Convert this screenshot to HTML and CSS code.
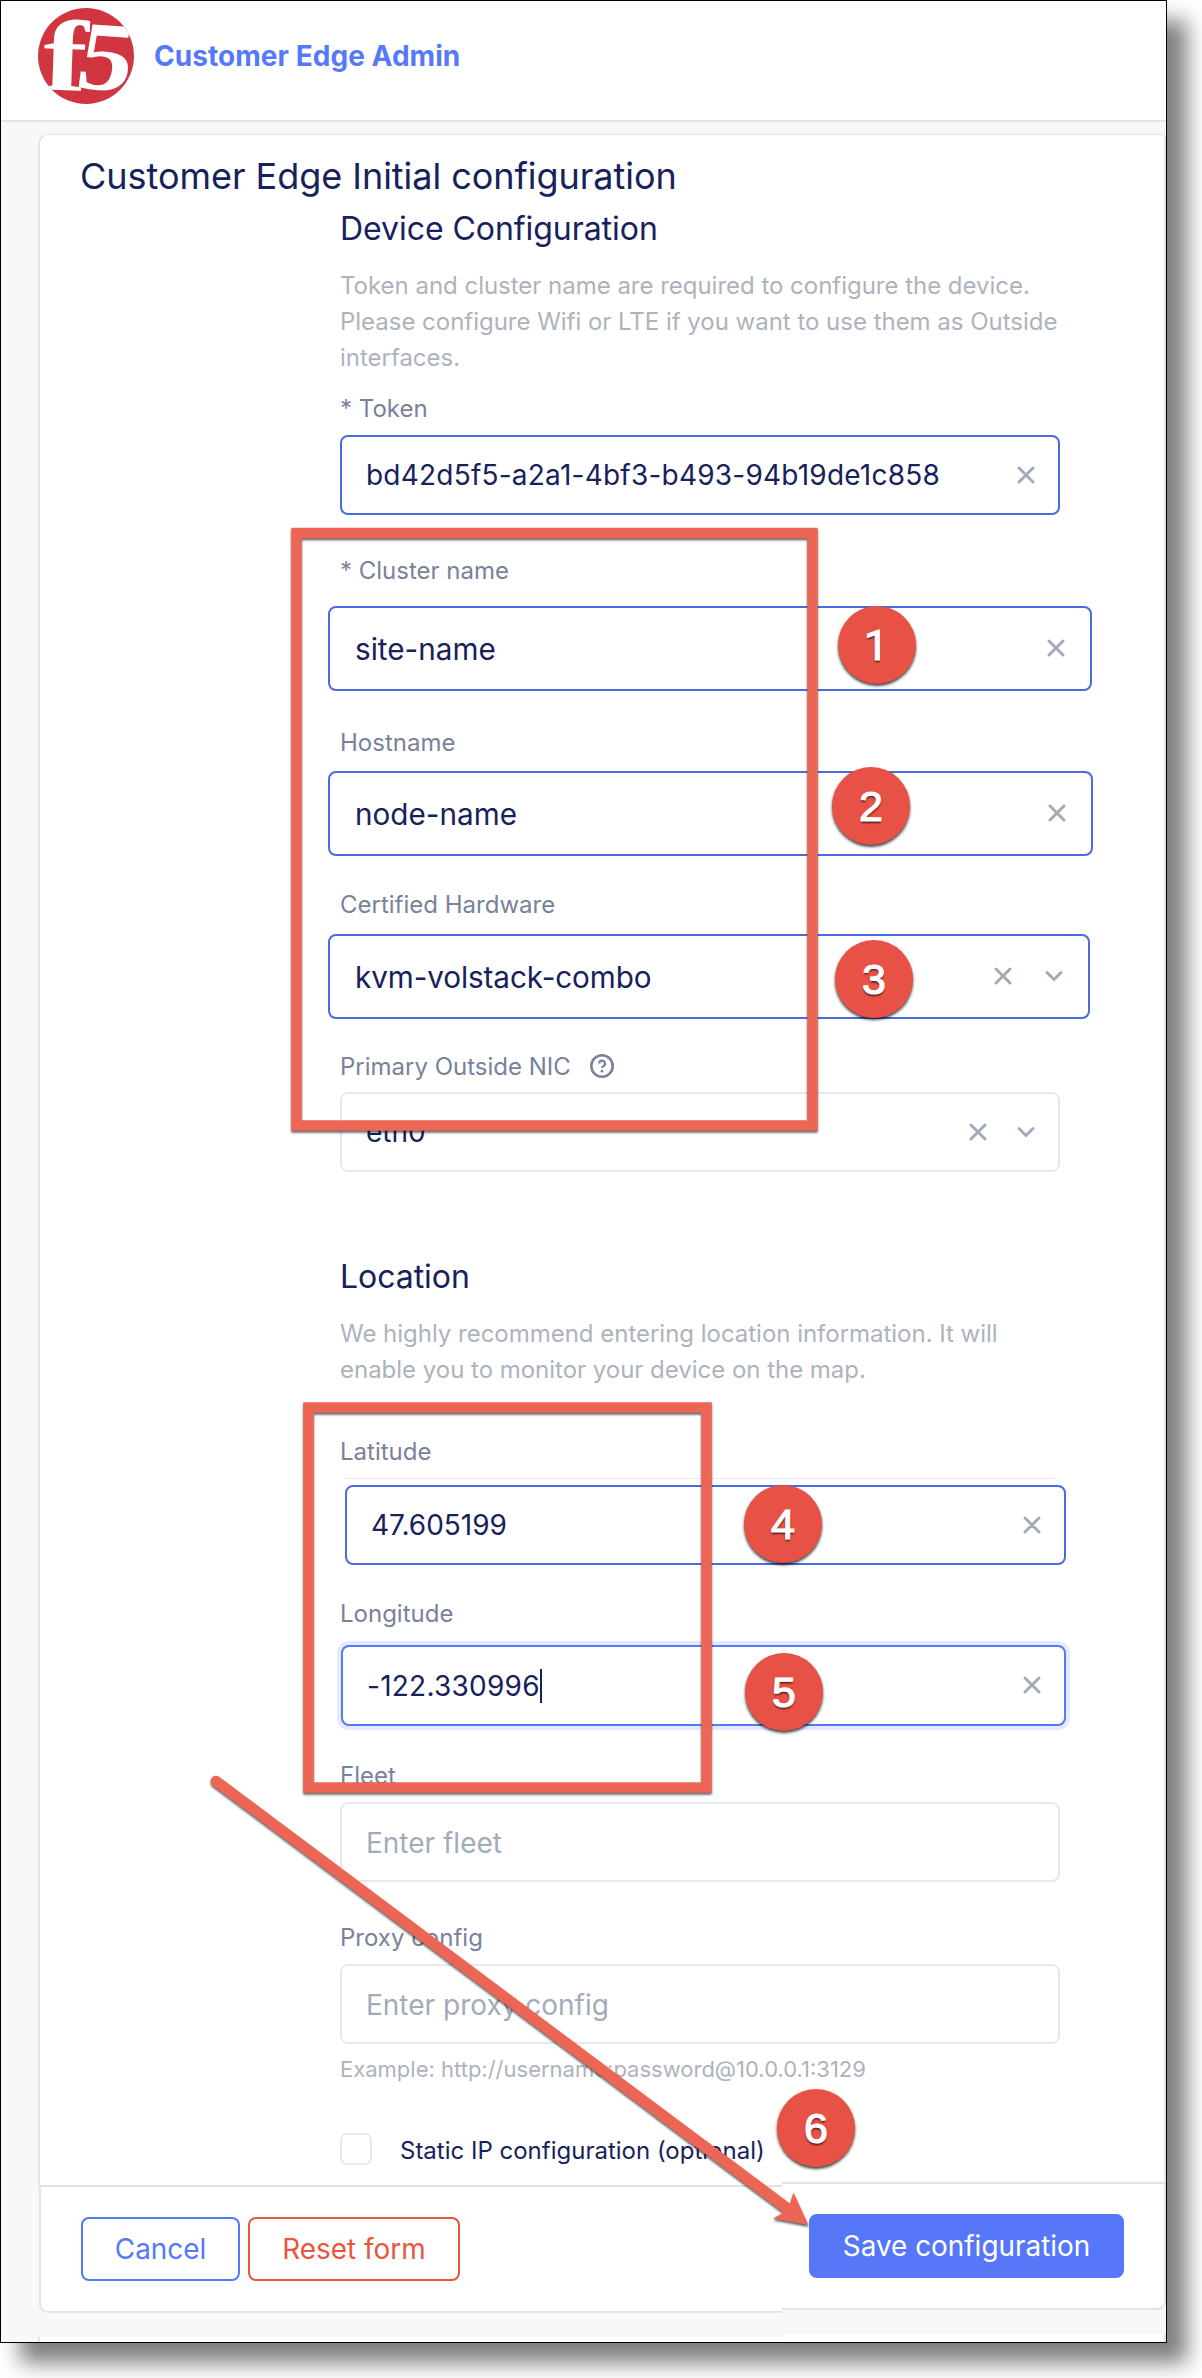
FILE: index.html
```html
<!DOCTYPE html>
<html lang="en">
<head>
<meta charset="utf-8">
<title>Customer Edge Admin</title>
<link rel="stylesheet" href="styles.css">
</head>
<body>
<svg width="0" height="0" class="defs" aria-hidden="true">
  <symbol id="clear" viewBox="0 0 18 18"><path d="M2 2 16 16M16 2 2 16" fill="none" stroke="currentColor" stroke-width="2.9" stroke-linecap="round"/></symbol>
  <symbol id="chevron" viewBox="0 0 18 18"><path d="M2 5.5 9 12.5 16 5.5" fill="none" stroke="currentColor" stroke-width="2.9" stroke-linecap="round" stroke-linejoin="round"/></symbol>
</svg>
<div class="window">
  <header class="topbar">
    <svg class="logo" viewBox="0 0 96 96" role="img" aria-label="f5">
      <clipPath id="disc"><circle cx="48" cy="48" r="48"/></clipPath>
      <circle cx="48" cy="48" r="48" fill="#d13640"/>
      <g clip-path="url(#disc)" fill="#fff" font-family="'Liberation Serif', serif" font-weight="700">
        <text transform="translate(4 81.5) rotate(2) scale(1.32 1)" font-size="101">f</text>
        <text transform="translate(35.5 79.5) rotate(4) skewX(-6) scale(1.12 1)" font-size="98">5</text>
      </g>
    </svg>
    <span class="brand">Customer Edge Admin</span>
  </header>
  <main class="page">
    <div class="card">
      <h1>Customer Edge Initial configuration</h1>
      <form class="form">
        <h2>Device Configuration</h2>
        <p class="intro">Token and cluster name are required to configure the device.<br>Please configure Wifi or LTE if you want to use them as Outside<br>interfaces.</p>
        <div class="field token">
          <label>* Token</label>
          <div class="input active"><span>bd42d5f5-a2a1-4bf3-b493-94b19de1c858</span><svg><use href="#clear"/></svg></div>
        </div>
        <div class="field cluster">
          <label>* Cluster name</label>
          <div class="input active large"><span>site-name</span><svg><use href="#clear"/></svg></div>
        </div>
        <div class="field hostname">
          <label>Hostname</label>
          <div class="input active large"><span>node-name</span><svg><use href="#clear"/></svg></div>
        </div>
        <div class="field hardware">
          <label>Certified Hardware</label>
          <div class="input active large"><span>kvm-volstack-combo</span><svg><use href="#clear"/></svg><svg><use href="#chevron"/></svg></div>
        </div>
        <div class="field nic">
          <label>Primary Outside NIC
            <svg class="help" viewBox="0 0 24 24"><circle cx="12" cy="12" r="10.700" fill="none" stroke="currentColor" stroke-width="2.600"/><path d="M9.200 9.600a2.900 2.900 0 1 1 4.300 2.500c-1 .6-1.500 1-1.500 2" fill="none" stroke="currentColor" stroke-width="2.200"/><circle cx="12" cy="17.200" r="1.400" fill="currentColor"/></svg>
          </label>
          <div class="input"><span>eth0</span><svg><use href="#clear"/></svg><svg><use href="#chevron"/></svg></div>
        </div>
        <h2 class="location">Location</h2>
        <p class="intro">We highly recommend entering location information. It will<br>enable you to monitor your device on the map.</p>
        <div class="field latitude">
          <label>Latitude</label>
          <div class="rule"></div>
          <div class="input active"><span>47.605199</span><svg><use href="#clear"/></svg></div>
        </div>
        <div class="field longitude">
          <label>Longitude</label>
          <div class="input focus"><span class="caret">-122.330996</span><svg><use href="#clear"/></svg></div>
        </div>
        <div class="field fleet">
          <label>Fleet</label>
          <div class="input placeholder"><span>Enter fleet</span></div>
        </div>
        <div class="field proxy">
          <label>Proxy config</label>
          <div class="input placeholder"><span>Enter proxy config</span></div>
          <div class="hint">Example: http://username:password@10.0.0.1:3129</div>
        </div>
        <div class="check"><i class="box"></i><span>Static IP configuration (optional)</span></div>
      </form>
    </div>
    <footer class="footer">
      <div class="side start">
        <div class="panel">
          <button class="btn cancel" type="button">Cancel</button>
          <button class="btn reset" type="button">Reset form</button>
        </div>
        <div class="strip"></div>
      </div>
      <div class="side end">
        <div class="panel">
          <button class="btn save" type="button">Save configuration</button>
        </div>
        <div class="strip"></div>
      </div>
    </footer>
  </main>
</div>
<svg class="marks" viewBox="0 0 1202 2378">
  <g class="frames">
    <rect x="296.500" y="533" width="516" height="592.500"/>
    <rect x="308.500" y="1407.500" width="398" height="380"/>
  </g>
  <g class="arrow">
    <path d="M212.800 1785.400A5.200 5.200 0 0 1 219.200 1776.800L790 2203.500 793.500 2192.500 808.500 2225 773 2218.500 783.500 2212.500Z"/>
  </g>
</svg>
<b class="badge n1">1</b>
<b class="badge n2">2</b>
<b class="badge n3">3</b>
<b class="badge n4">4</b>
<b class="badge n5">5</b>
<b class="badge n6">6</b>
</body>
</html>
```
FILE: styles.css
```css
* { box-sizing: border-box; }
body {
  margin: 0;
  width: 1202px;
  height: 2378px;
  position: relative;
  overflow: hidden;
  background: #fff;
  font-family: Inter, "Liberation Sans", sans-serif;
  color: #17225b;
}
.defs { display: block; }
.window {
  width: 1167px;
  height: 2343px;
  border: 1px solid #000;
  background: #f7f8fa;
  box-shadow: 20px 20px 20px rgba(0, 0, 0, .5);
}
.topbar {
  height: 121px;
  padding: 7px 0 0 37px;
  display: flex;
  gap: 20px;
  background: #fff;
  border-bottom: 2px solid #e0e5e9;
}
.logo { width: 96px; height: 96px; }
.brand { font-size: 28px; line-height: 40px; letter-spacing: .05px; font-weight: 700; color: #5579fa; margin-top: 28px; }
.page { padding: 12px 0 0 37px; }
.card {
  height: 2048px;
  border: solid #e0e5e9;
  border-width: 1px 2px 0 2px;
  border-radius: 10px 4px 0 0;
  background: #fff;
}
h1, h2, p { margin: 0; font-weight: 400; }
h1 { font-size: 36px; line-height: 44px; letter-spacing: -.03px; padding: 19px 0 0 40px; }
.form { margin: 11px 0 0 300px; width: 720px; }
h2 { font-size: 32px; line-height: 39px; letter-spacing: -.05px; padding-bottom: 1px; }
h2.location { margin-top: 47px; }
.intro { margin: 19px 0 14px; font-size: 24px; line-height: 36px; letter-spacing: -.02px; color: #adb3bd; white-space: nowrap; }
.field { height: 162px; }
.field label { display: flex; align-items: flex-start; height: 36px; font-size: 24px; line-height: 38px; color: #78829a; }
.help { width: 24px; height: 24px; margin: 6px 0 0 19px; }
.input {
  height: 80px;
  margin-top: 9px;
  padding: 0 23px 0 24px;
  display: flex;
  align-items: center;
  border: 2px solid #e6e9f3;
  border-radius: 8px;
  background: #fff;
  font-size: 28px;
  line-height: 40px;
}
.input span { margin-right: auto; }
.input svg { width: 18px; height: 18px; color: #a2a9b9; margin: 0 0 1px 30px; }
.input.active { border-color: #4a6ce2; }
.input.placeholder { color: #a3abbb; line-height: 42px; padding-top: 1px; }
.input.large { height: 85px; margin-left: -12px; width: 764px; font-size: 29.700px; padding: 0 25px; }
.token .input { letter-spacing: .22px; }
.cluster .input { margin-top: 18px; }
.hostname { margin-top: 10px; }
.hostname .input { margin-top: 11px; width: 765px; }
.hardware .input.large { margin-top: 12px; width: 762px; letter-spacing: -.1px; }
.hardware .input svg + svg { margin-left: 33px; }
.nic .input { margin-top: 8px; }
.latitude { margin-top: 45px; }
.latitude .rule { height: 1px; margin: 9px 5px 0; background: #e7eaf3; }
.latitude .input { width: 721px; margin: 6px 0 0 5px; }
.input.focus { width: 725px; height: 81px; margin: 14px 0 0 1px; border-color: #5579f7; box-shadow: 0 0 0 4px #e4e9fd; letter-spacing: .25px; }
.caret { border-right: 2px solid #17225b; line-height: 34px; }
.proxy { height: auto; }
.hint { font-size: 22px; line-height: 32px; margin-top: 9px; color: #adb3bd; }
.check { display: flex; align-items: center; height: 32px; margin-top: 48px; gap: 28px; font-size: 24px; }
.check span { padding-top: 2px; }
.check .box { width: 32px; height: 32px; border: 2px solid #e6e9f3; border-radius: 7px; }
.footer { display: flex; }
.side { height: 160px; }
.side .panel { height: 128px; display: flex; background: #fff; border: solid #e0e5e9; border-width: 2px 0; }
.start { width: 744px; padding-top: 3px; background: linear-gradient(90deg, #e0e5e9 2px, #fff 2px) top / 100% 3px no-repeat; }
.start .panel { margin-left: 1px; padding: 30px 0 0 40px; border-left-width: 2px; border-radius: 0 0 0 9px; gap: 8px; }
.end { flex: 1; }
.end .panel { border-right-width: 2px; border-radius: 0 0 9px 0; padding: 30px 0 0 27px; }
.strip { margin-top: 24px; height: 8px; background: #fff; }
.start .strip { border-left: 2px solid #e0e5e9; height: 5px; }
.end .strip { border-right: 2px solid #e0e5e9; }
.btn { height: 64px; padding: 0; border: 2px solid; border-radius: 8px; background: #fff; font: 400 27.900px/40px Inter, sans-serif; text-align: center; }
.cancel { width: 159px; color: #5579fa; }
.reset { width: 212px; color: #e8563d; }
.save { width: 315px; padding-bottom: 1px; color: #fff; background: #5577f8; border-color: #5577f8; }
.marks { position: absolute; left: 0; top: 0; width: 1202px; height: 2378px; }
.frames rect { fill: none; stroke: #ed6655; stroke-width: 10.500; }
.frames, .arrow { filter: drop-shadow(0 2px 1px rgba(0, 0, 0, .6)); }
.arrow path { fill: #ed6655; }
.badge {
  position: absolute;
  width: 78px;
  height: 78px;
  border-radius: 50%;
  background: #e85146;
  box-shadow: 0 2px 3px rgba(0, 0, 0, .75);
  color: #fff;
  font: 400 43px/79px "Liberation Sans", sans-serif;
  -webkit-text-stroke: 1.200px #fff;
  text-align: center;
  text-shadow: 0 2px 2px rgba(0, 0, 0, .7);
}
.n1 { left: 838px; top: 606px; font-family: Roboto, sans-serif; padding-right: 2px; }
.n2 { left: 832px; top: 767px; }
.n3 { left: 835px; top: 940px; }
.n4 { left: 744px; top: 1485px; }
.n5 { left: 745px; top: 1653px; }
.n6 { left: 777px; top: 2089px; }
```
